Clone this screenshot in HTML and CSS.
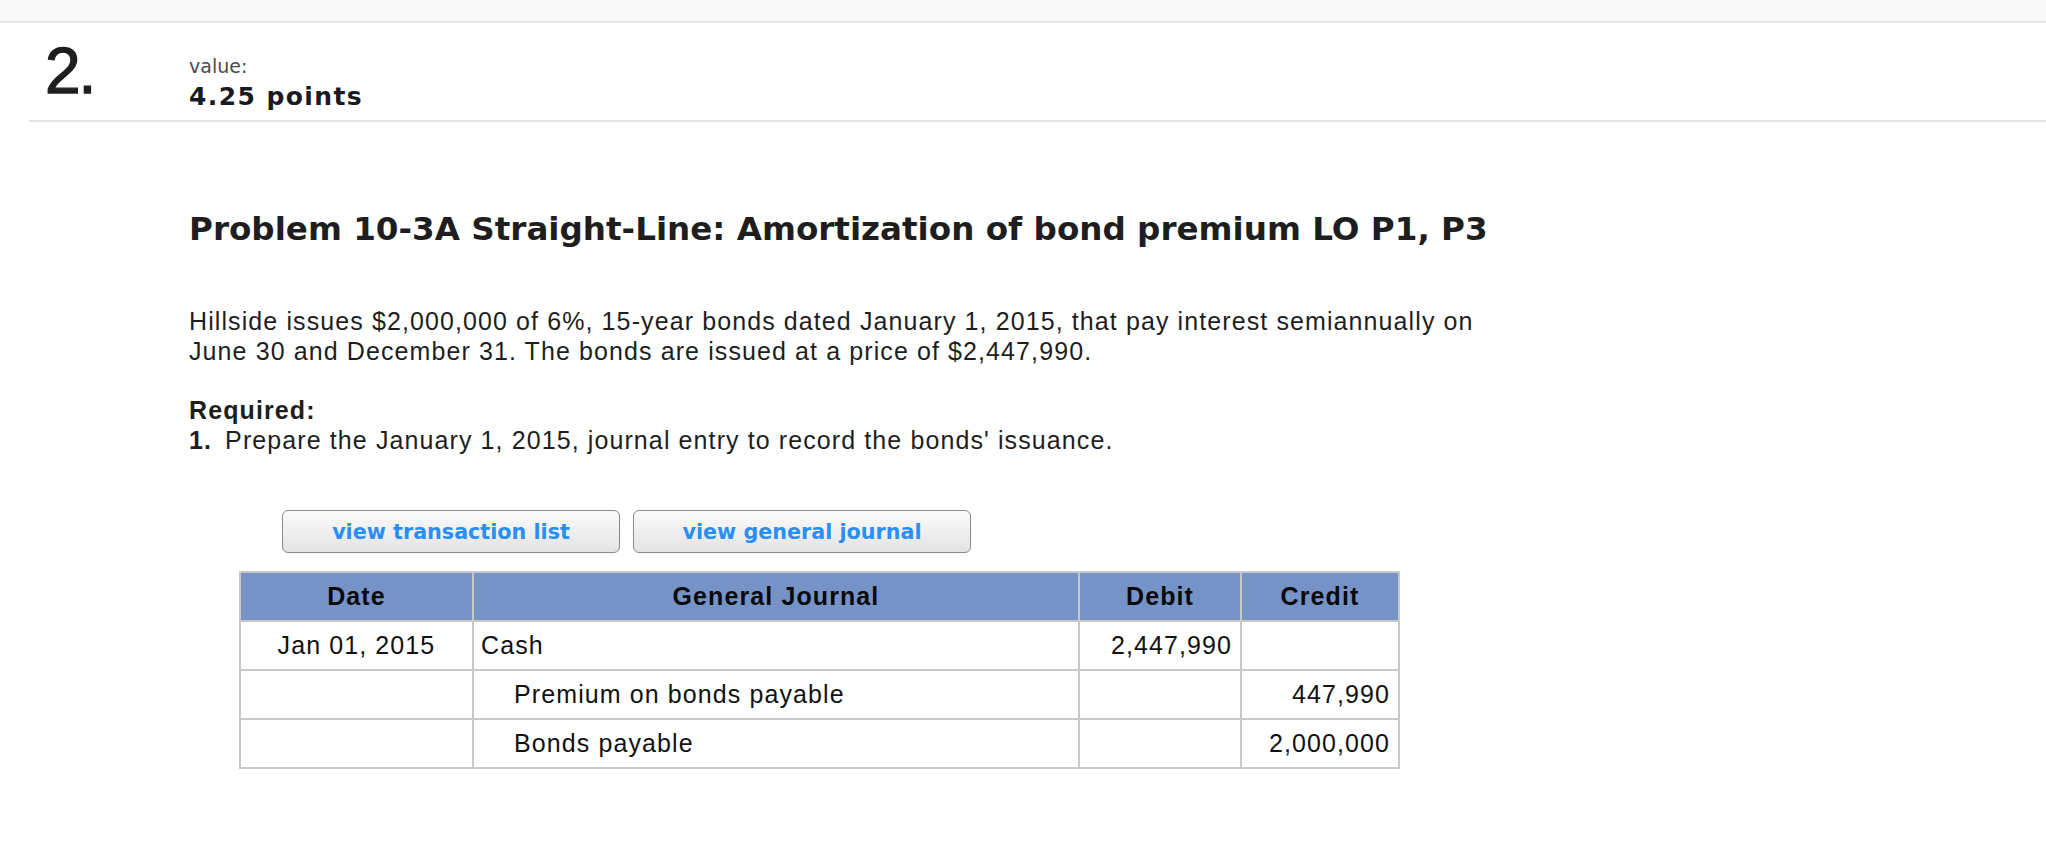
FILE: index.html
```html
<!DOCTYPE html>
<html lang="en">
<head>
<meta charset="utf-8">
<title>Problem 10-3A</title>
<link rel="stylesheet" href="styles.css">
</head>
<body>
<div class="topbar"></div>
<div class="qhead">
  <div class="qnum">2.</div>
  <div class="qvalue">
    <div class="value-label">value:</div>
    <div class="value-points">4.25 points</div>
  </div>
</div>
<div class="content">
  <h1 class="title">Problem 10-3A Straight-Line: Amortization of bond premium LO P1, P3</h1>
  <p class="text">Hillside issues $2,000,000 of 6%, 15-year bonds dated January 1, 2015, that pay interest semiannually on<br>June 30 and December 31. The bonds are issued at a price of $2,447,990.</p>
  <div class="required">
    <div class="req-title">Required:</div>
    <div class="req-item"><span class="req-num">1.</span> Prepare the January 1, 2015, journal entry to record the bonds' issuance.</div>
  </div>
  <div class="buttons">
    <button class="btn">view transaction list</button>
    <button class="btn">view general journal</button>
  </div>
  <table class="journal">
    <colgroup>
      <col class="c-date">
      <col class="c-gj">
      <col class="c-debit">
      <col class="c-credit">
    </colgroup>
    <thead>
      <tr><th>Date</th><th>General Journal</th><th>Debit</th><th>Credit</th></tr>
    </thead>
    <tbody>
      <tr><td class="date">Jan 01, 2015</td><td class="acct">Cash</td><td class="num">2,447,990</td><td class="num"></td></tr>
      <tr><td class="date"></td><td class="acct indent">Premium on bonds payable</td><td class="num"></td><td class="num">447,990</td></tr>
      <tr><td class="date"></td><td class="acct indent">Bonds payable</td><td class="num"></td><td class="num">2,000,000</td></tr>
    </tbody>
  </table>
</div>
</body>
</html>
```
FILE: styles.css
```css
* { box-sizing: border-box; }
html, body { margin: 0; padding: 0; background: #ffffff; }
body { font-family: "Liberation Sans", Arial, sans-serif; color: #1a1a1a; }

.topbar {
  height: 23px;
  background: #f8f8f8;
  border-bottom: 2px solid #e6e6e6;
}

.qhead {
  margin-left: 29px;
  height: 99px;
  padding: 16px 0 0 16px;
  border-bottom: 2px solid #e4e4e4;
  display: flex;
  align-items: flex-start;
}
.qnum {
  width: 144px;
  font-family: "Liberation Sans", Arial, sans-serif;
  font-size: 64px;
  line-height: 64px;
  letter-spacing: -2px;
  color: #1e1e1e;
  -webkit-text-stroke: 1.3px #1e1e1e;
}
.qvalue { padding-top: 15px; }
.value-label {
  font-family: "DejaVu Sans", Verdana, sans-serif;
  font-size: 19px;
  line-height: 24px;
  color: #4a4a55;
}
.value-points {
  font-family: "DejaVu Sans", Verdana, sans-serif;
  font-weight: bold;
  font-size: 25px;
  line-height: 38px;
  letter-spacing: 1.4px;
  color: #1a1a22;
}

.content { padding-left: 189px; }

.title {
  margin: 87px 0 0 0;
  font-family: "DejaVu Sans", Verdana, sans-serif;
  font-weight: bold;
  font-size: 32.6px;
  line-height: 40px;
  color: #1e1e1e;
}

.text {
  margin: 57px 0 0 0;
  font-size: 25px;
  line-height: 30px;
  letter-spacing: 1.1px;
  color: #1e1e1e;
}

.required {
  margin-top: 29px;
  font-size: 25px;
  line-height: 30px;
  letter-spacing: 1.1px;
  color: #1e1e1e;
}
.req-title, .req-num { font-weight: bold; }
.req-num { margin-right: 5px; }

.buttons {
  margin: 55px 0 0 93px;
  display: flex;
  gap: 13px;
}
.btn {
  width: 338px;
  height: 43px;
  padding: 0;
  border: 1.5px solid #8a8a8a;
  border-radius: 6px;
  background: linear-gradient(#fbfbfb, #e3e3e3);
  font-family: "DejaVu Sans", Verdana, sans-serif;
  font-weight: bold;
  font-size: 20.7px;
  color: #2a8ff2;
}

.journal {
  margin: 18px 0 0 50px;
  width: 1159px;
  table-layout: fixed;
  border-collapse: collapse;
  font-size: 25px;
  letter-spacing: 1.1px;
  color: #111111;
}
.c-date { width: 233px; }
.c-gj { width: 606px; }
.c-debit { width: 162px; }
.c-credit { width: 158px; }
.journal th, .journal td {
  border: 2px solid #c8c8c8;
  height: 49px;
  padding: 0 8px;
  vertical-align: middle;
}
.journal th {
  background: #7593c7;
  font-weight: bold;
  text-align: center;
  color: #0a0a0a;
}
.journal td.date { text-align: center; }
.journal td.acct { text-align: left; padding-left: 7px; }
.journal td.indent { padding-left: 40px; }
.journal td.num { text-align: right; padding-right: 8px; }
```
